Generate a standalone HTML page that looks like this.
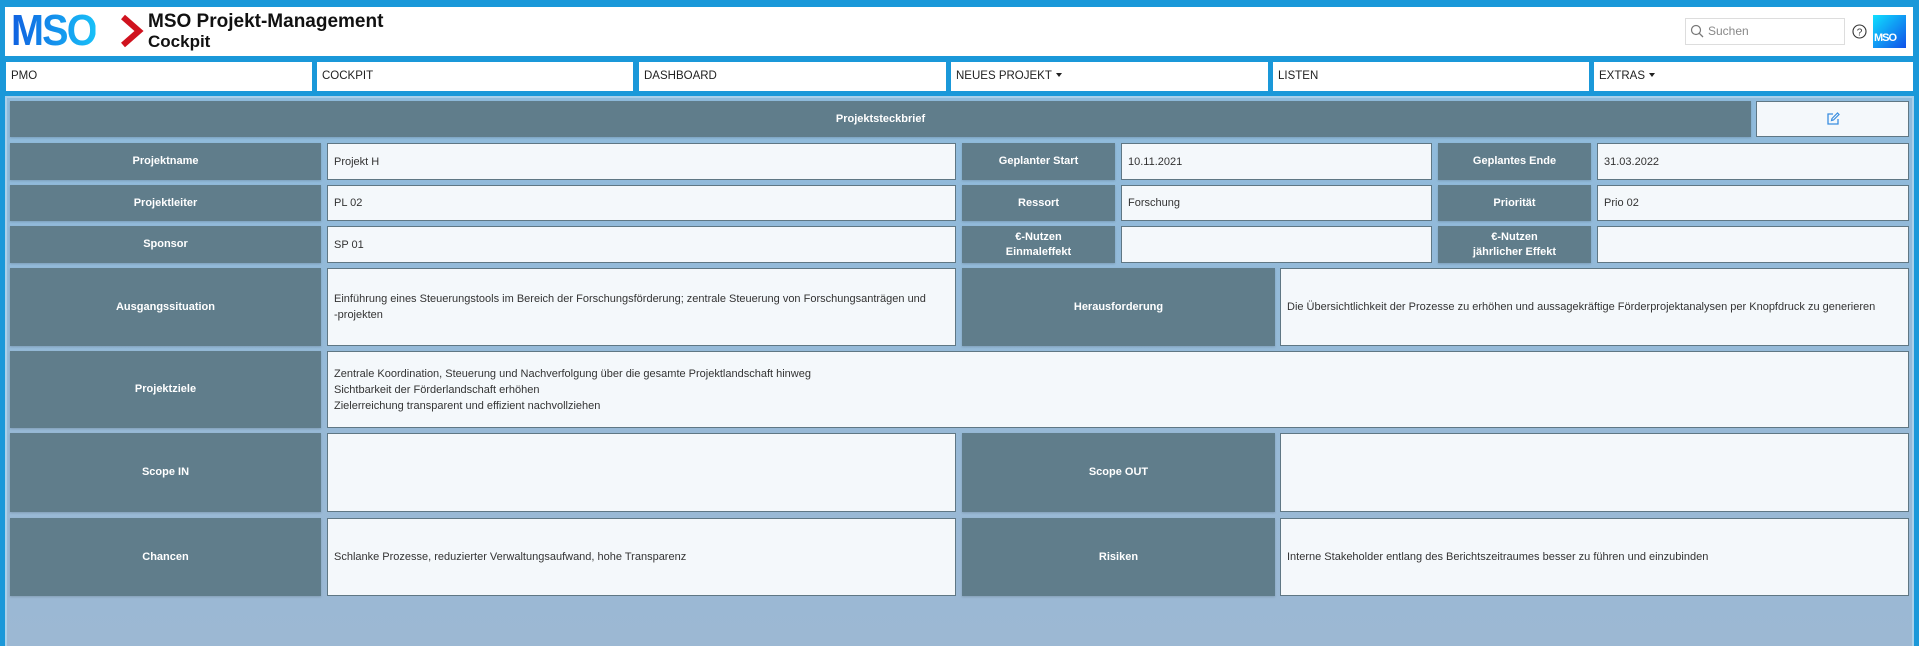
<!DOCTYPE html>
<html><head><meta charset="utf-8"><style>
*{box-sizing:border-box;margin:0;padding:0}
body{width:1919px;height:643px;background:#1a98d9;font-family:"Liberation Sans",Arial,sans-serif;position:relative;overflow:hidden}
.a{position:absolute}
.hdr{left:5px;top:7px;width:1908px;height:49px;background:#fff}
.nav{top:62px;height:29px;background:#fff;font-size:11.5px;color:#222;padding-left:5px;line-height:29px}
.nav i{display:inline-block;width:0;height:0;border-left:3.5px solid transparent;border-right:3.5px solid transparent;border-top:4px solid #222;vertical-align:middle;margin-left:4px;margin-top:-2px}
.panel{left:5px;top:96px;width:1909px;height:550px;background:linear-gradient(#8fbbdc,#9cb8d3);border:2px solid #a9d0ea;border-bottom:none}
.l{background:#607d8b;color:#fff;font-weight:bold;font-size:11px;display:flex;align-items:center;justify-content:center;text-align:center;line-height:15px;box-shadow:0 1px 2px rgba(0,0,0,.15)}
.v{background:#f4f8fb;border:1px solid #5f7784;color:#333;font-size:11px;display:flex;align-items:center;padding-left:6px;line-height:16px}
</style></head><body>
<div class="a hdr"></div>
<div class="a" style="left:11px;top:10px;font-size:44px;font-weight:bold;letter-spacing:-2px;line-height:42px;background:linear-gradient(90deg,#1060e0,#18c0f8);-webkit-background-clip:text;background-clip:text;color:transparent;transform:scaleX(0.9);transform-origin:left">MSO</div>
<svg class="a" style="left:120px;top:14px" width="24" height="34" viewBox="0 0 24 34"><path d="M3 3 L19 17 L3 31" fill="none" stroke="#d0121e" stroke-width="6"/></svg>
<div class="a" style="left:148px;top:11px;font-size:19px;font-weight:bold;color:#111">MSO Projekt-Management</div>
<div class="a" style="left:148px;top:32px;font-size:17px;font-weight:bold;color:#111">Cockpit</div>
<div class="a" style="left:1685px;top:18px;width:160px;height:27px;border:1px solid #ddd;background:#fff"></div>
<svg class="a" style="left:1690px;top:24px" width="14" height="14"><circle cx="6" cy="6" r="4.5" fill="none" stroke="#777" stroke-width="1.2"/><line x1="9.3" y1="9.3" x2="13" y2="13" stroke="#777" stroke-width="1.3"/></svg>
<div class="a" style="left:1708px;top:24px;font-size:12px;color:#888">Suchen</div>
<svg class="a" style="left:1852px;top:24px" width="15" height="15"><circle cx="7.5" cy="7.5" r="6.5" fill="none" stroke="#333" stroke-width="1.1"/><text x="7.5" y="11.5" font-size="10" text-anchor="middle" fill="#333" font-family="Liberation Sans">?</text></svg>
<div class="a" style="left:1873px;top:15px;width:33px;height:33px;background:linear-gradient(135deg,#10e0ff,#1050e8);color:#fff;font-weight:bold;font-size:11px;padding:17px 0 0 1px;letter-spacing:-1px">MSO</div>
<div class="a nav" style="left:6px;width:306px">PMO</div>
<div class="a nav" style="left:317px;width:316px">COCKPIT</div>
<div class="a nav" style="left:639px;width:307px">DASHBOARD</div>
<div class="a nav" style="left:951px;width:317px">NEUES PROJEKT<i></i></div>
<div class="a nav" style="left:1273px;width:316px">LISTEN</div>
<div class="a nav" style="left:1594px;width:319px">EXTRAS<i></i></div>
<div class="a panel"></div>
<div class="a l" style="left:10px;top:101px;width:1741px;height:36px">Projektsteckbrief</div>
<div class="a v" style="left:1756px;top:101px;width:153px;height:36px;justify-content:center;padding:0"><svg width="14" height="14" viewBox="0 0 14 14"><path d="M7 2 H2 V12 H12 V7" fill="none" stroke="#3a8ee0" stroke-width="1.3"/><path d="M5.5 8.5 L6 6.5 L11.5 1 L13 2.5 L7.5 8 Z" fill="none" stroke="#3a8ee0" stroke-width="1.2"/></svg></div>

<div class="a l" style="left:10px;top:143px;width:311px;height:37px">Projektname</div>
<div class="a v" style="left:327px;top:143px;width:629px;height:37px">Projekt H</div>
<div class="a l" style="left:962px;top:143px;width:153px;height:37px">Geplanter Start</div>
<div class="a v" style="left:1121px;top:143px;width:311px;height:37px">10.11.2021</div>
<div class="a l" style="left:1438px;top:143px;width:153px;height:37px">Geplantes Ende</div>
<div class="a v" style="left:1597px;top:143px;width:312px;height:37px">31.03.2022</div>

<div class="a l" style="left:10px;top:185px;width:311px;height:36px">Projektleiter</div>
<div class="a v" style="left:327px;top:185px;width:629px;height:36px">PL 02</div>
<div class="a l" style="left:962px;top:185px;width:153px;height:36px">Ressort</div>
<div class="a v" style="left:1121px;top:185px;width:311px;height:36px">Forschung</div>
<div class="a l" style="left:1438px;top:185px;width:153px;height:36px">Priorität</div>
<div class="a v" style="left:1597px;top:185px;width:312px;height:36px">Prio 02</div>

<div class="a l" style="left:10px;top:226px;width:311px;height:37px">Sponsor</div>
<div class="a v" style="left:327px;top:226px;width:629px;height:37px">SP 01</div>
<div class="a l" style="left:962px;top:226px;width:153px;height:37px">€-Nutzen<br>Einmaleffekt</div>
<div class="a v" style="left:1121px;top:226px;width:311px;height:37px"></div>
<div class="a l" style="left:1438px;top:226px;width:153px;height:37px">€-Nutzen<br>jährlicher Effekt</div>
<div class="a v" style="left:1597px;top:226px;width:312px;height:37px"></div>

<div class="a l" style="left:10px;top:268px;width:311px;height:78px">Ausgangssituation</div>
<div class="a v" style="left:327px;top:268px;width:629px;height:78px;padding-right:4px">Einführung eines Steuerungstools im Bereich der Forschungsförderung; zentrale Steuerung von Forschungsanträgen und<br>-projekten</div>
<div class="a l" style="left:962px;top:268px;width:313px;height:78px">Herausforderung</div>
<div class="a v" style="left:1280px;top:268px;width:629px;height:78px">Die Übersichtlichkeit der Prozesse zu erhöhen und aussagekräftige Förderprojektanalysen per Knopfdruck zu generieren</div>

<div class="a l" style="left:10px;top:351px;width:311px;height:77px">Projektziele</div>
<div class="a v" style="left:327px;top:351px;width:1582px;height:77px">Zentrale Koordination, Steuerung und Nachverfolgung über die gesamte Projektlandschaft hinweg<br>Sichtbarkeit der Förderlandschaft erhöhen<br>Zielerreichung transparent und effizient nachvollziehen</div>

<div class="a l" style="left:10px;top:433px;width:311px;height:79px">Scope IN</div>
<div class="a v" style="left:327px;top:433px;width:629px;height:79px"></div>
<div class="a l" style="left:962px;top:433px;width:313px;height:79px">Scope OUT</div>
<div class="a v" style="left:1280px;top:433px;width:629px;height:79px"></div>

<div class="a l" style="left:10px;top:518px;width:311px;height:78px">Chancen</div>
<div class="a v" style="left:327px;top:518px;width:629px;height:78px">Schlanke Prozesse, reduzierter Verwaltungsaufwand, hohe Transparenz</div>
<div class="a l" style="left:962px;top:518px;width:313px;height:78px">Risiken</div>
<div class="a v" style="left:1280px;top:518px;width:629px;height:78px">Interne Stakeholder entlang des Berichtszeitraumes besser zu führen und einzubinden</div>
</body></html>
